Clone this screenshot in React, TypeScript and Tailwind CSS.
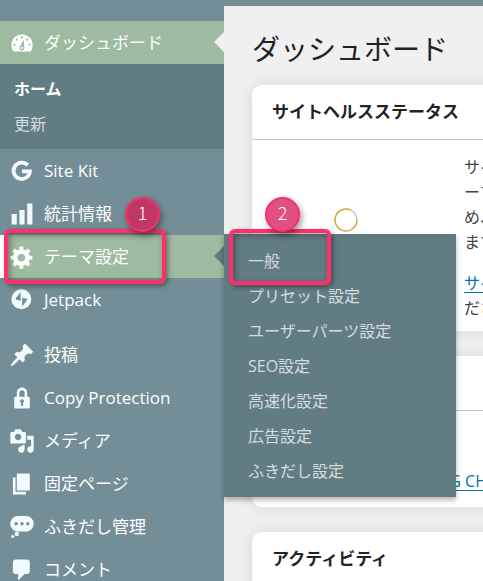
import type { ReactNode } from "react";
import clsx from "clsx";

function Icon({ children }: { children: ReactNode }) {
  return (
    <svg viewBox="0 0 20 20" className="h-[26px] w-[26px] shrink-0" fill="currentColor" fillRule="evenodd" aria-hidden="true">
      {children}
    </svg>
  );
}

const icons = {
  dashboard: (
    <Icon>
      <path d="M3.4 16.500C2.500 15.200 1.800 13.600 1.800 11.700 1.800 6.900 5.400 3.500 10 3.500s8.200 3.400 8.200 8.200c0 1.900-.7 3.500-1.600 4.800z" />
      <g fill="#9ebaa0">
        <circle cx="10" cy="5.700" r="0.8" />
        <circle cx="6" cy="7.400" r="0.8" />
        <circle cx="14" cy="7.400" r="0.8" />
        <circle cx="4.200" cy="11.300" r="0.8" />
        <circle cx="15.800" cy="11.300" r="0.8" />
        <path d="M11.300 7.500 11.800 13.300a1.900 1.900 0 1 1-3.500-.4z" />
      </g>
      <circle cx="10" cy="13.700" r="0.9" />
    </Icon>
  ),
  google: (
    <Icon>
      <path d="M14.400 5.500A6.300 6.300 0 1 0 16.100 10.200H10" fill="none" stroke="currentColor" strokeWidth="2.900" />
    </Icon>
  ),
  stats: (
    <Icon>
      <path d="M18 18V2h-4v16zM12 18V7H8v11zM6 18v-8H2v8z" />
    </Icon>
  ),
  gear: (
    <Icon>
      <path d="M18 12h-2.180c-.17.7-.44 1.350-.81 1.930l1.540 1.540-2.100 2.100-1.540-1.540c-.58.36-1.230.63-1.910.79V19H8v-2.180c-.68-.16-1.330-.43-1.910-.79l-1.540 1.540-2.120-2.120 1.540-1.540c-.36-.58-.63-1.230-.79-1.910H1V9.030h2.170c.16-.7.44-1.350.8-1.940L2.430 5.550l2.100-2.100 1.540 1.540c.58-.37 1.240-.64 1.930-.81V2h3v2.180c.68.16 1.330.43 1.910.79l1.540-1.540 2.120 2.120-1.540 1.540c.36.59.64 1.240.8 1.940H18V12zm-8.500 1.500c1.660 0 3-1.340 3-3s-1.340-3-3-3-3 1.340-3 3 1.340 3 3 3z" />
    </Icon>
  ),
  jetpack: (
    <Icon>
      <path d="M9.500 1.700a7.700 7.700 0 1 0 0 15.400A7.700 7.700 0 0 0 9.500 1.700zM9 3.800v6.800L5.600 9.800c-.5-.1-.7-.6-.5-1zM10.100 15V8.200l3.400.8c.5.1.7.6.5 1z" />
    </Icon>
  ),
  pin: (
    <Icon>
      <path d="M10.440 3.020l1.820-1.820 6.360 6.350-1.830 1.820c-1.050-.68-2.480-.57-3.410.36l-.75.75c-.92.93-1.040 2.350-.35 3.410l-1.830 1.820-2.410-2.410-2.800 2.790c-.42.42-3.380 2.710-3.800 2.290s1.860-3.390 2.280-3.810l2.790-2.790L4.100 9.360l1.830-1.820c1.050.69 2.480.57 3.400-.36l.75-.75c.93-.92 1.050-2.350.36-3.410z" />
    </Icon>
  ),
  lock: (
    <Icon>
      <path d="M14 9h1c.55 0 1 .45 1 1v7c0 .55-.45 1-1 1H5c-.55 0-1-.45-1-1v-7c0-.55.45-1 1-1h1V6c0-2.210 1.790-4 4-4s4 1.790 4 4v3zm-2 0V6c0-1.100-.9-2-2-2s-2 .9-2 2v3h4zm-1 7l-.36-2.150c.51-.24.86-.75.86-1.350 0-.83-.67-1.500-1.500-1.500s-1.500.67-1.500 1.500c0 .6.35 1.110.86 1.350L9 16h2z" />
    </Icon>
  ),
  media: (
    <Icon>
      <path d="M13 11V4c0-.55-.45-1-1-1h-1.670L9 1H5L3.670 3H2c-.55 0-1 .45-1 1v7c0 .55.45 1 1 1h10c.55 0 1-.45 1-1zM7 4.500c1.380 0 2.500 1.120 2.500 2.500S8.380 9.500 7 9.500 4.500 8.380 4.500 7 5.620 4.500 7 4.500zM14 6h5v10.500c0 1.380-1.120 2.500-2.500 2.500S14 17.880 14 16.500s1.120-2.500 2.500-2.500c.17 0 .34.02.5.05V9h-3V6zm-4 8.050V13h2v3.500c0 1.380-1.120 2.500-2.500 2.500S7 17.880 7 16.500 8.120 14 9.500 14c.17 0 .34.02.5.05z" />
    </Icon>
  ),
  page: (
    <Icon>
      <path d="M6 15V2h10v13H6zm-1 1h8v2H3V5h2v11z" />
    </Icon>
  ),
  balloon: (
    <Icon>
      <path d="M7 1.500h6c3.300 0 6 2.700 6 6s-2.700 6-6 6H7c-3.300 0-6-2.700-6-6s2.700-6 6-6zM5.500 6.200a1.300 1.300 0 1 0 0 2.600 1.300 1.300 0 0 0 0-2.600zM10 6.200a1.300 1.300 0 1 0 0 2.600 1.300 1.300 0 0 0 0-2.600zM14.500 6.200a1.300 1.300 0 1 0 0 2.600 1.300 1.300 0 0 0 0-2.600z" />
      <circle cx="6" cy="15.300" r="1.700" />
      <circle cx="2.900" cy="17.300" r="1.200" />
    </Icon>
  ),
  comment: (
    <Icon>
      <path d="M5 2h9c1.100 0 2 .9 2 2v7c0 1.100-.9 2-2 2h-2l-5 5v-5H5c-1.100 0-2-.9-2-2V4c0-1.100.9-2 2-2z" />
    </Icon>
  ),
};

const themeMenu = ["一般", "プリセット設定", "ユーザーパーツ設定", "SEO設定", "高速化設定", "広告設定", "ふきだし設定"];

function MenuLink({ icon, label, active }: { icon: ReactNode; label: string; active?: boolean }) {
  return (
    <a
      href="#"
      className={clsx(
        "flex h-[43px] items-center gap-[9px] pl-[9px] text-[17px]",
        active ? "bg-[#9ebaa0] text-white" : "text-[#f2fcff]"
      )}
    >
      {icon}
      <span className="text-white">{label}</span>
    </a>
  );
}

function StepBadge({ step, className }: { step: number; className: string }) {
  return (
    <span
      className={clsx(
        "absolute z-30 flex h-[35px] w-[35px] items-center justify-center rounded-full border-2 border-[#f7306b] pb-1 font-['Noto_Sans_CJK_JP',sans-serif] text-[18px] font-light text-white shadow-[2px_3px_6px_rgba(0,0,0,0.4)]",
        className
      )}
    >
      {step}
    </span>
  );
}

function Card({ title, children }: { title?: string; children?: ReactNode }) {
  return (
    <section className="rounded-[10px] bg-white shadow-[0_0_16px_rgba(0,0,0,0.1)]">
      <h2 className="h-[55px] border-b border-[#c3c4c7] px-5 text-[17px] leading-[54px] font-bold text-[#1d2327]">{title}</h2>
      {children}
    </section>
  );
}

export default function App() {
  return (
    <div className="flex h-screen overflow-hidden bg-[#738e96] font-['Open_Sans','Noto_Sans_CJK_JP',sans-serif] whitespace-nowrap">
      <nav className="relative z-10 w-[224px] shrink-0 pt-[21px]">
        <div className="relative">
          <MenuLink icon={icons.dashboard} label="ダッシュボード" active />
          <span className="absolute top-[11px] right-0 border-y-[10px] border-r-[10px] border-y-transparent border-r-[#f0f0f0]" />
        </div>
        <ul className="bg-[#627c83] pt-2 pb-[7px] pl-[14px] text-[16px] leading-[35px]">
          <li>
            <a href="#" className="font-bold text-white">ホーム</a>
          </li>
          <li>
            <a href="#" className="text-[#d5dddf]">更新</a>
          </li>
        </ul>
        <MenuLink icon={icons.google} label="Site Kit" />
        <MenuLink icon={icons.stats} label="統計情報" />

        <div className="relative">
          <MenuLink icon={icons.gear} label="テーマ設定" active />
          <span className="absolute inset-y-0 left-0 w-1 bg-white" />
          <span className="absolute top-[11px] right-0 border-y-[10px] border-r-[10px] border-y-transparent border-r-[#627c83]" />
          <ul className="absolute -top-px left-full w-[232px] bg-[#627c83] pt-[10px] pb-2 pl-6 text-[16px] leading-[35px] shadow-[0_3px_5px_rgba(0,0,0,0.3)]">
            {themeMenu.map((item) => (
              <li key={item} className="h-[35px]">
                <a href="#" className="text-[#d5dddf]">{item}</a>
              </li>
            ))}
          </ul>
          <span className="absolute -top-[6px] left-1 z-20 h-[55px] w-[162px] rounded-[6px] border-4 border-[#ff2f6b] shadow-[2px_2px_5px_rgba(0,0,0,0.4),inset_2px_2px_6px_rgba(0,0,0,0.35)]" />
          <span className="absolute -top-[6px] left-[229px] z-20 h-[56px] w-[102px] rounded-[6px] border-4 border-[#ff2f6b] shadow-[2px_2px_5px_rgba(0,0,0,0.4),inset_2px_2px_6px_rgba(0,0,0,0.35)]" />
          <StepBadge step={1} className="-top-[38px] left-[125px] bg-[#c03868]" />
          <StepBadge step={2} className="-top-[38px] left-[265px] bg-[#e05080]" />
        </div>

        <MenuLink icon={icons.jetpack} label="Jetpack" />
        <div className="h-3" />
        <MenuLink icon={icons.pin} label="投稿" />
        <MenuLink icon={icons.lock} label="Copy Protection" />
        <MenuLink icon={icons.media} label="メディア" />
        <MenuLink icon={icons.page} label="固定ページ" />
        <MenuLink icon={icons.balloon} label="ふきだし管理" />
        <MenuLink icon={icons.comment} label="コメント" />
      </nav>

      <main className="mt-[6px] min-w-0 flex-1 bg-[#f0f0f0] pl-7">
        <h1 className="pt-[23px] text-[28px] leading-10 text-[#1d2327]">ダッシュボード</h1>
        {/* cards run past the right edge of the window */}
        <div className="mt-4 -mr-6 flex flex-col gap-[25px]">
          <Card title="サイトヘルスステータス">
            <div className="flex h-[191px] items-start gap-[45px] pt-[15px] pl-5 text-[16px] leading-[25px] text-[#3c434a]">
              <div className="flex w-[147px] shrink-0 justify-center pt-[53px]">
                <svg viewBox="0 0 24 24" className="h-6 w-6" fill="none" strokeWidth="1.200">
                  <circle cx="12" cy="12" r="11" stroke="#c3c4c7" />
                  <path d="M23 12A11 11 0 1 1 17 2.200" stroke="#dba617" />
                </svg>
              </div>
              <div>
                <p>サイ<br />ーマ<br />め、<br />ます</p>
                <p className="mt-4">
                  <a href="#" className="text-[#0073aa] underline decoration-[#0073aa] decoration-1 underline-offset-3">サイ</a>
                  <br />
                  ださ
                </p>
              </div>
            </div>
          </Card>
          <Card>
            <div className="flex h-[96px] items-end justify-end pr-5 pb-[14px] text-[16px] leading-6">
              <a href="#" className="text-[#0073aa] underline decoration-[#0073aa] decoration-1 underline-offset-3">G CH</a>
            </div>
          </Card>
          <Card title="アクティビティ">
            <div className="h-40" />
          </Card>
        </div>
      </main>
    </div>
  );
}
